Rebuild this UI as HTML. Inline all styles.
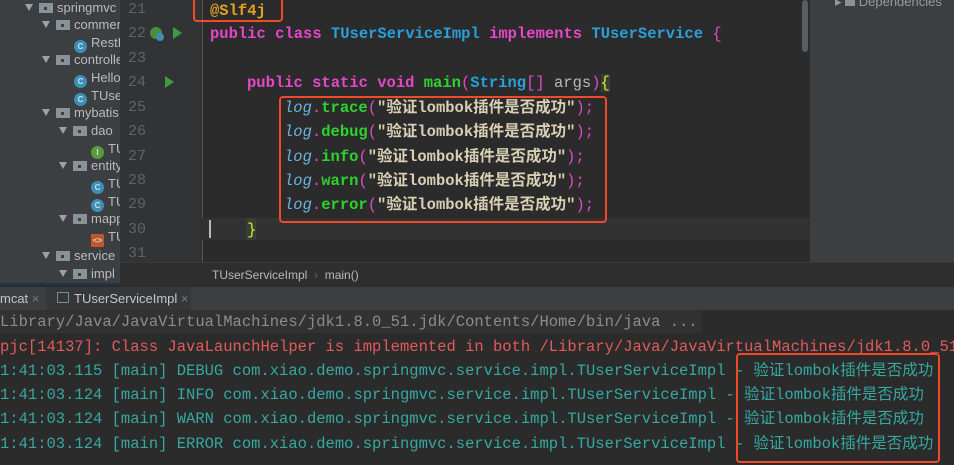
<!DOCTYPE html>
<html><head><meta charset="utf-8">
<style>
*{margin:0;padding:0;box-sizing:border-box}
body{width:954px;height:465px;overflow:hidden;background:#2b2b2b;position:relative;font-family:"Liberation Sans","Noto Sans CJK SC",sans-serif}
.abs{position:absolute}
.mono{font-family:"Liberation Mono","Noto Sans CJK SC",monospace;font-size:15.5px;white-space:pre;line-height:20px}
#tree{left:0;top:0;width:120px;height:285px;background:#3c3f41;border-bottom:2px solid #1f3550;overflow:hidden}
.ti{position:absolute;color:#bbbbbb;font-size:13px;white-space:nowrap;line-height:16px}
.ar{display:inline-block;width:0;height:0;border-left:4px solid transparent;border-right:4px solid transparent;border-top:7px solid #a0a0a0;margin-right:6px;vertical-align:1px}
.fd{display:inline-block;width:14px;height:10px;background:#8a9299;margin-right:4px;vertical-align:-1px;position:relative}
.fd:after{content:"";position:absolute;left:5px;top:4px;width:3px;height:3px;background:#3c3f41}
.ci{display:inline-block;width:13px;height:13px;border-radius:50%;background:#3d8fb6;color:#cde;font-size:8px;line-height:13px;text-align:center;margin-right:4px;vertical-align:-2px;font-weight:bold}
.ii{background:#5a9a3f}
.ln{color:#606366;font-family:"Liberation Mono",monospace;font-size:15px;left:128px;line-height:20px}
.kw{color:#e547c8;font-weight:bold}
.cl{color:#2aa0d8;font-weight:bold}
.fn{color:#2dd32d;font-weight:bold}
.st{color:#d8cfb4;font-weight:bold}
.lg{color:#6ab2dc;font-style:italic}
.pk{color:#e547c8}
.box{position:absolute;border:2px solid #f04a2a;border-radius:4px}
.con{left:0;font-size:15.5px;color:#35a8a2}
</style></head><body>
<div id="tree" class="abs">
 <div class="ti" style="left:25px;top:0px"><span class="ar"></span><span class="fd"></span>springmvc</div>
 <div class="ti" style="left:42px;top:17px"><span class="ar"></span><span class="fd"></span>commer</div>
 <div class="ti" style="left:74px;top:35px"><span class="ci">C</span>RestR</div>
 <div class="ti" style="left:42px;top:52px"><span class="ar"></span><span class="fd"></span>controlle</div>
 <div class="ti" style="left:74px;top:70px"><span class="ci">C</span>Hello</div>
 <div class="ti" style="left:74px;top:88px"><span class="ci">C</span>TUse</div>
 <div class="ti" style="left:42px;top:105px"><span class="ar"></span><span class="fd"></span>mybatis</div>
 <div class="ti" style="left:59px;top:123px"><span class="ar"></span><span class="fd"></span>dao</div>
 <div class="ti" style="left:91px;top:141px"><span class="ci ii">I</span>TU</div>
 <div class="ti" style="left:59px;top:158px"><span class="ar"></span><span class="fd"></span>entity</div>
 <div class="ti" style="left:91px;top:176px"><span class="ci">C</span>TU</div>
 <div class="ti" style="left:91px;top:194px"><span class="ci">C</span>TU</div>
 <div class="ti" style="left:59px;top:211px"><span class="ar"></span><span class="fd"></span>mapp</div>
 <div class="ti" style="left:91px;top:229px"><span class="ci" style="border-radius:1px;background:#c0582a">&lt;&gt;</span>TU</div>
 <div class="ti" style="left:42px;top:248px"><span class="ar"></span><span class="fd"></span>service</div>
 <div class="ti" style="left:59px;top:266px"><span class="ar"></span><span class="fd"></span>impl</div>
</div>
<div class="abs" style="left:120px;top:0;width:82px;height:262px;background:#313335"></div>
<div class="abs" style="left:202px;top:0;width:1px;height:262px;background:#555"></div>
<div class="abs" style="left:810px;top:0;width:144px;height:287px;background:#3c3f41"></div>
<div class="abs" style="left:802px;top:0;width:6px;height:52px;background:#5a5d5f;border-radius:3px"></div>
<div class="abs" style="left:835px;top:-6px;color:#999;font-size:13px">▸ <span style="display:inline-block;width:10px;height:10px;background:#8a9299"></span> Dependencies</div>
<div class="abs" style="left:200px;top:218px;width:610px;height:22px;background:#323232"></div>
<div class="abs" style="left:246px;top:218px;width:10px;height:22px;background:#344134"></div>
<!-- line numbers -->
<div class="abs ln" style="top:0px">21</div>
<div class="abs ln" style="top:24px">22</div>
<div class="abs ln" style="top:49px">23</div>
<div class="abs ln" style="top:73px">24</div>
<div class="abs ln" style="top:98px">25</div>
<div class="abs ln" style="top:122px">26</div>
<div class="abs ln" style="top:147px">27</div>
<div class="abs ln" style="top:171px">28</div>
<div class="abs ln" style="top:195px">29</div>
<div class="abs ln" style="top:220px">30</div>
<div class="abs ln" style="top:244px">31</div>
<div class="abs" style="left:150px;top:27px;width:12px;height:12px;border-radius:50%;background:#4d8c3a"></div>
<div class="abs" style="left:156px;top:33px;width:8px;height:8px;border-radius:50%;background:#3d8fb6"></div>
<div class="abs" style="left:173px;top:27px;border-left:9px solid #3f9a45;border-top:6px solid transparent;border-bottom:6px solid transparent"></div>
<div class="abs" style="left:165px;top:76px;border-left:9px solid #3f9a45;border-top:6px solid transparent;border-bottom:6px solid transparent"></div>
<!-- code -->
<div class="abs mono" style="left:210px;top:1px;color:#e0a321;font-weight:bold">@Slf4j</div>
<div class="abs mono" style="left:210px;top:24px"><span class="kw">public class </span><span class="cl">TUserServiceImpl </span><span class="kw">implements </span><span class="cl">TUserService </span><span class="pk">{</span></div>
<div class="abs mono" style="left:247px;top:73px"><span class="kw">public static void </span><span class="fn">main</span><span class="pk">(</span><span class="cl">String</span><span class="pk">[]</span><span style="color:#b9b9b9"> args</span><span class="pk">)</span><span style="color:#e8e030;background:#344134">{</span></div>
<div class="abs mono" style="left:284px;top:98px"><span class="lg">log</span><span class="pk">.</span><span class="fn">trace</span><span class="pk">(</span><span class="st">"验证lombok插件是否成功"</span><span class="pk">);</span></div>
<div class="abs mono" style="left:284px;top:122px"><span class="lg">log</span><span class="pk">.</span><span class="fn">debug</span><span class="pk">(</span><span class="st">"验证lombok插件是否成功"</span><span class="pk">);</span></div>
<div class="abs mono" style="left:284px;top:147px"><span class="lg">log</span><span class="pk">.</span><span class="fn">info</span><span class="pk">(</span><span class="st">"验证lombok插件是否成功"</span><span class="pk">);</span></div>
<div class="abs mono" style="left:284px;top:171px"><span class="lg">log</span><span class="pk">.</span><span class="fn">warn</span><span class="pk">(</span><span class="st">"验证lombok插件是否成功"</span><span class="pk">);</span></div>
<div class="abs mono" style="left:284px;top:195px"><span class="lg">log</span><span class="pk">.</span><span class="fn">error</span><span class="pk">(</span><span class="st">"验证lombok插件是否成功"</span><span class="pk">);</span></div>
<div class="abs mono" style="left:247px;top:220px;color:#e8e030">}</div>
<div class="abs" style="left:209px;top:220px;width:2px;height:18px;background:#bbb"></div>
<div class="box" style="left:193px;top:-3px;width:90px;height:25px"></div>
<div class="box" style="left:279px;top:96px;width:328px;height:127px"></div>
<!-- breadcrumb -->
<div class="abs" style="left:120px;top:262px;width:834px;height:25px;background:#2e2e2e;border-top:1px solid #3a3a3a"></div>
<div class="abs" style="left:212px;top:268px;color:#b8b8b8;font-size:12px">TUserServiceImpl <span style="color:#666">&nbsp;›&nbsp;</span> main()</div>
<!-- tabs -->
<div class="abs" style="left:0;top:287px;width:954px;height:23px;background:#3c3f41"></div>
<div class="abs" style="left:46px;top:287px;width:145px;height:23px;background:#35383a"></div>
<div class="abs" style="left:0;top:291px;color:#c5c5c5;font-size:13px">mcat <span style="color:#777">×</span></div>
<div class="abs" style="left:57px;top:292px;width:12px;height:11px;border:1px solid #7a8a99"></div>
<div class="abs" style="left:74px;top:291px;color:#c5c5c5;font-size:13px">TUserServiceImpl <span style="color:#777">×</span></div>
<!-- console -->
<div class="abs" style="left:0;top:310px;width:702px;height:23px;background:#323232"></div>
<div class="abs mono con" style="top:312px;color:#8c8c8c">Library/Java/JavaVirtualMachines/jdk1.8.0_51.jdk/Contents/Home/bin/java ...</div>
<div class="abs mono con" style="top:337px;color:#e35a5a">pjc[14137]: Class JavaLaunchHelper is implemented in both /Library/Java/JavaVirtualMachines/jdk1.8.0_51</div>
<div class="abs mono con" style="top:361px">1:41:03.115 [main] DEBUG com.xiao.demo.springmvc.service.impl.TUserServiceImpl - 验证lombok插件是否成功</div>
<div class="abs mono con" style="top:385px">1:41:03.124 [main] INFO com.xiao.demo.springmvc.service.impl.TUserServiceImpl - 验证lombok插件是否成功</div>
<div class="abs mono con" style="top:409px">1:41:03.124 [main] WARN com.xiao.demo.springmvc.service.impl.TUserServiceImpl - 验证lombok插件是否成功</div>
<div class="abs mono con" style="top:434px">1:41:03.124 [main] ERROR com.xiao.demo.springmvc.service.impl.TUserServiceImpl - 验证lombok插件是否成功</div>
<div class="box" style="left:736px;top:353px;width:204px;height:110px"></div>
</body></html>
